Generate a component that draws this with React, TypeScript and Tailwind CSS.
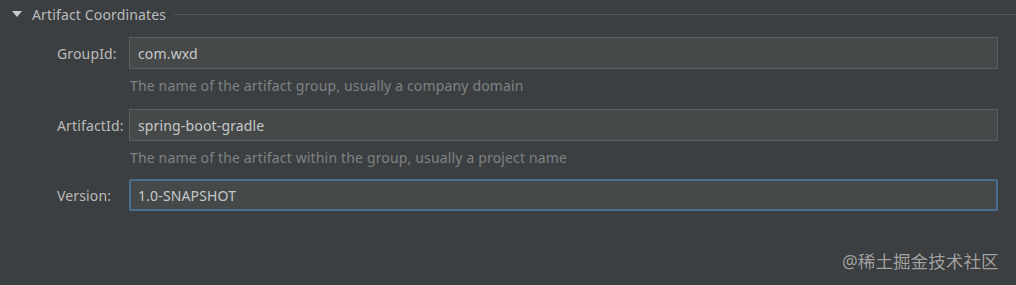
import React from 'react';

const Field: React.FC<{ label: string; value: string; hint?: string; hintH?: string; focused?: boolean }> = ({
  label,
  value,
  hint,
  hintH,
  focused,
}) => {
  return (
    <>
      <div className="flex items-center h-[32px] text-[14px] text-[#bbbbbb] tracking-[0.15px]">{label}</div>
      <div>
        <div
          className={
            focused
              ? 'h-[32px] bg-[#45494a] border-2 border-[#4a6e91] rounded-[2px] flex items-center px-[7px] text-[14px] text-[#c8c8c8] tracking-[0.15px]'
              : 'h-[32px] bg-[#45494a] border border-[#5c5f60] flex items-center px-[8px] text-[14px] text-[#c8c8c8] tracking-[0.15px]'
          }
        >
          {value}
        </div>
        {hint && (
          <div className={`${hintH} pt-[7px] pl-[1px] text-[14px] leading-[19px] text-[#7f8283] tracking-[0.16px]`}>
            {hint}
          </div>
        )}
      </div>
    </>
  );
};

export default function App() {
  return (
    <div
      className="w-[1016px] h-[285px] bg-[#3c3f41] relative overflow-hidden"
      style={{ fontFamily: '"Noto Sans", "Open Sans", sans-serif' }}
    >
      <div className="h-[28px] flex items-center pl-[12px]">
        <svg width="10" height="8" viewBox="0 0 10 8" className="mr-[10px]">
          <polygon points="0,1 10,1 5,7" fill="#c9c9c9" />
        </svg>
        <span className="text-[14px] text-[#bbbbbb] tracking-[0.15px]">Artifact Coordinates</span>
        <div className="flex-1 h-px bg-[#515456] ml-[8px]" />
      </div>
      <div className="grid grid-cols-[72px_869px] pl-[57px] pt-[9px]">
        <Field
          label="GroupId:"
          value="com.wxd"
          hint="The name of the artifact group, usually a company domain"
          hintH="h-[40px]"
        />
        <Field
          label="ArtifactId:"
          value="spring-boot-gradle"
          hint="The name of the artifact within the group, usually a project name"
          hintH="h-[38px]"
        />
        <Field label="Version:" value="1.0-SNAPSHOT" focused />
      </div>
      <div
        className="absolute left-[842px] top-[248px] text-[17.6px] text-[#a3a3a3]"
        style={{ fontFamily: '"Noto Sans", "Noto Sans CJK SC", sans-serif', textShadow: '0 0 1px #2a2a2a' }}
      >
        @稀土掘金技术社区
      </div>
    </div>
  );
}
